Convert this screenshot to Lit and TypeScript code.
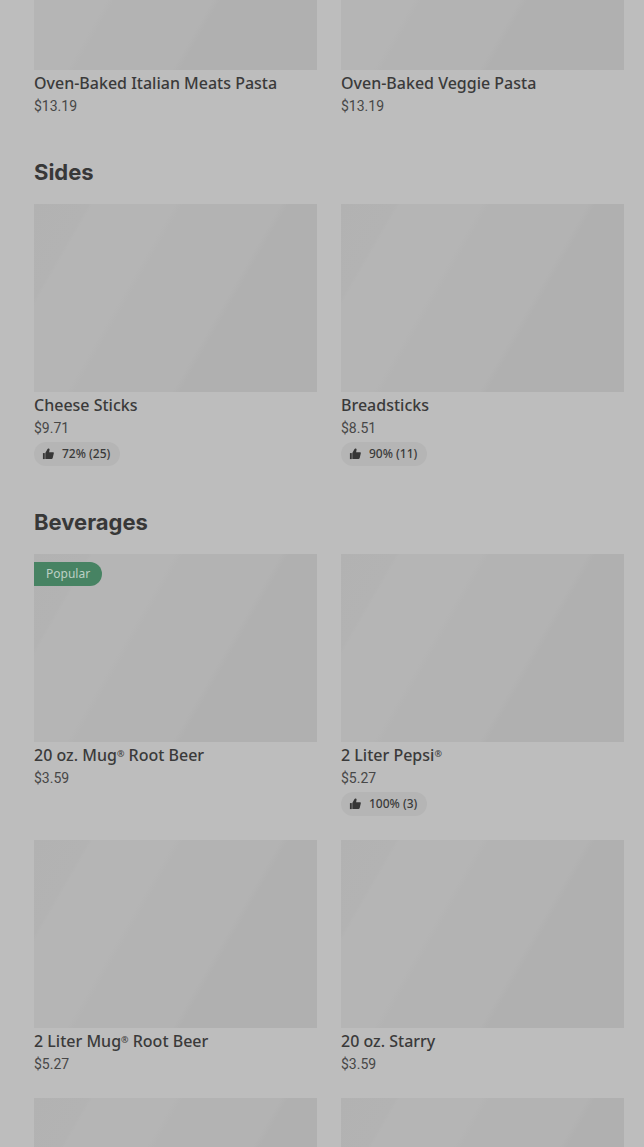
import { LitElement, html, css, nothing, svg } from "lit";
import { customElement, property } from "lit/decorators.js";

interface Product {
  name?: string;
  price?: string;
  rating?: string;
  popular?: boolean;
}

interface Section {
  heading?: string;
  products: Product[];
}

const sections: Section[] = [
  {
    products: [
      { name: "Oven-Baked Italian Meats Pasta", price: "$13.19" },
      { name: "Oven-Baked Veggie Pasta", price: "$13.19" },
    ],
  },
  {
    heading: "Sides",
    products: [
      { name: "Cheese Sticks", price: "$9.71", rating: "72% (25)" },
      { name: "Breadsticks", price: "$8.51", rating: "90% (11)" },
    ],
  },
  {
    heading: "Beverages",
    products: [
      { name: "20 oz. Mug® Root Beer", price: "$3.59", popular: true },
      { name: "2 Liter Pepsi®", price: "$5.27", rating: "100% (3)" },
      { name: "2 Liter Mug® Root Beer", price: "$5.27" },
      { name: "20 oz. Starry", price: "$3.59" },
      {},
      {},
    ],
  },
];

const thumb = svg`
  <rect x="1" y="5.5" width="2" height="6.5"></rect>
  <path d="M3.6 5.5 6 1.2C6.3.7 6.6.5 7 .5 7.9.5 8.4 1.2 8.2 2L7.7 4.5H11.8c.7 0 1.2.6 1 1.3l-1.2 5.1c-.2.7-.7 1.1-1.4 1.1H3.6Z"></path>
`;

/* Sets the registered mark as a small raised sign. */
const withMarks = (name: string) =>
  name
    .split(/(®)/)
    .map((part) => (part === "®" ? html`<span class="mark">®</span>` : part));

@customElement("product-card")
export class ProductCard extends LitElement {
  @property({ attribute: false }) product: Product = {};

  static styles = css`
    :host {
      display: block;
      min-width: 0;
    }
    .card {
      display: block;
      color: #3a3a3a;
      text-decoration: none;
    }
    .picture {
      position: relative;
      height: 188px;
      margin-bottom: 1px;
      background: linear-gradient(
        120deg,
        #b2b2b2 0%,
        #b3b3b3 14%,
        #b5b5b5 15%,
        #b5b5b5 36%,
        #b3b3b3 38%,
        #b3b3b3 63%,
        #b0b0b0 65%,
        #b0b0b0 100%
      );
    }
    .popular {
      position: absolute;
      top: 8px;
      left: 0;
      padding: 0 12px;
      border-radius: 0 12px 12px 0;
      background: #478363;
      color: #bdd0c5;
      font-size: 12px;
      line-height: 24px;
    }
    .name {
      display: block;
      margin-bottom: 1px;
      font-size: 16px;
      font-weight: 500;
      line-height: 24px;
    }
    .mark {
      font-size: 9px;
      line-height: 1;
      vertical-align: 4px;
    }
    .price {
      display: block;
      color: #474747;
      font-family: Roboto, "Liberation Sans", sans-serif;
      font-size: 14px;
      line-height: 20px;
    }
    .rating {
      display: flex;
      align-items: center;
      gap: 8px;
      width: fit-content;
      margin-top: 4px;
      padding: 0 10px 0 8px;
      border-radius: 12px;
      background: #b5b5b5;
      font-size: 12px;
      font-weight: 500;
      line-height: 24px;
    }
    .thumb {
      width: 12px;
      height: 12px;
      fill: #363636;
    }
  `;

  render() {
    const { name, price, rating, popular } = this.product;
    return html`
      <a class="card" href="#">
        <div class="picture">
          ${popular ? html`<span class="popular">Popular</span>` : nothing}
        </div>
        ${name ? html`<span class="name">${withMarks(name)}</span>` : nothing}
        ${price ? html`<span class="price">${price}</span>` : nothing}
        ${rating
          ? html`<span class="rating">
              <svg class="thumb" viewBox="0 0 13 13" aria-hidden="true">${thumb}</svg>
              <span>${rating}</span>
            </span>`
          : nothing}
      </a>
    `;
  }
}

@customElement("app-root")
export class AppRoot extends LitElement {
  static styles = css`
    :host {
      display: block;
      box-sizing: border-box;
      height: 100vh;
      overflow: hidden;
      background: #bdbdbd;
      color: #383838;
      font-family: "Noto Sans", "Liberation Sans", sans-serif;
    }
    /* The list starts part-way through its first row of pictures. */
    .menu {
      display: flex;
      flex-direction: column;
      gap: 40px;
      margin-top: -118px;
      padding: 0 20px 0 34px;
    }
    .heading {
      margin: 0 0 16px;
      font-family: Inter, "Liberation Sans", sans-serif;
      font-size: 22px;
      font-weight: 700;
      line-height: 32px;
    }
    .grid {
      display: grid;
      grid-template-columns: repeat(2, minmax(0, 1fr));
      gap: 24px;
    }
  `;

  render() {
    return html`
      <main class="menu">
        ${sections.map(
          (section) => html`
            <section>
              ${section.heading
                ? html`<h2 class="heading">${section.heading}</h2>`
                : nothing}
              <div class="grid">
                ${section.products.map(
                  (product) => html`<product-card .product=${product}></product-card>`
                )}
              </div>
            </section>
          `
        )}
      </main>
    `;
  }
}
